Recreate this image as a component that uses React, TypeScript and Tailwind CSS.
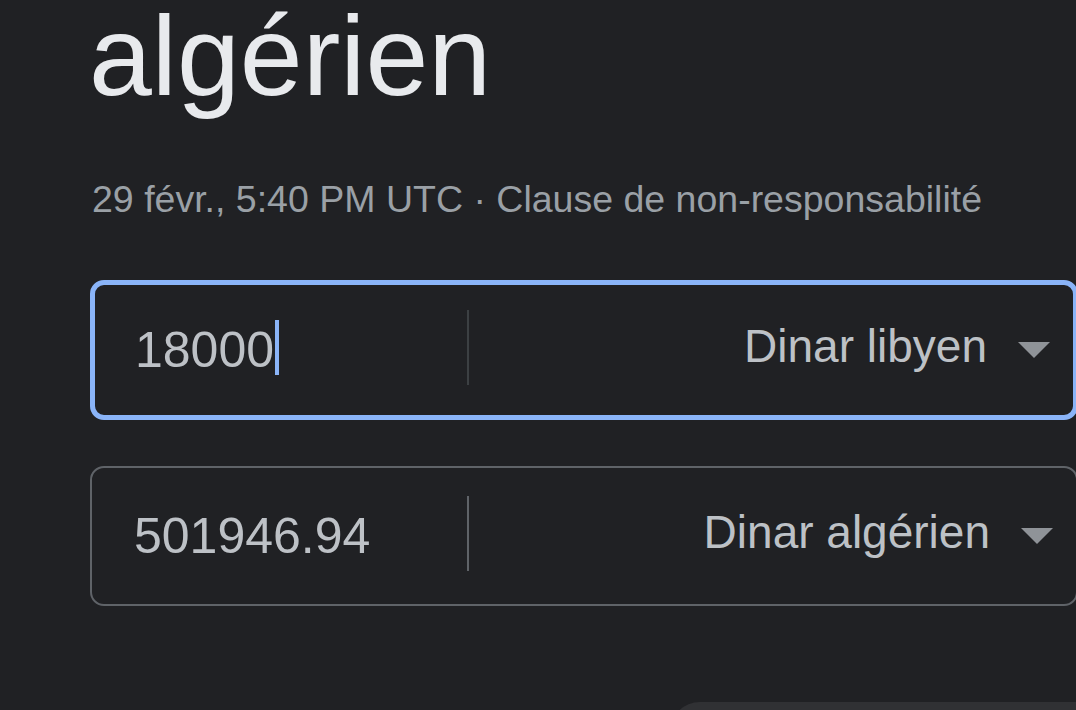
const font = { fontFamily: '"Liberation Sans", Arial, sans-serif' };

function Caret() {
  return <div className="ml-[1px] h-[55px] w-[4px] bg-[#8ab4f8] mb-[6px]" />;
}

function Triangle() {
  return (
    <svg className="ml-[31px] shrink-0" width="32" height="16" viewBox="0 0 32 16">
      <path d="M0 0h32L16 16z" fill="#8f9398" />
    </svg>
  );
}

type RowProps = {
  value: string;
  currency: string;
  focused?: boolean;
};

function ConverterRow({ value, currency, focused }: RowProps) {
  return (
    <div
      className={`flex h-[140px] w-[988px] shrink-0 items-center rounded-[14px] ${
        focused ? "border-[5px] border-[#8ab4f8]" : "border-2 border-[#5f6368]"
      }`}
    >
      <div
        className={`flex h-full items-center ${
          focused ? "w-[372px] pl-[40px]" : "w-[375px] pl-[42px]"
        }`}
      >
        <span className="text-[50px] text-[#bdc1c6]">{value}</span>
        {focused && <Caret />}
      </div>
      <div
        className={`mb-[6px] h-[75px] w-[2px] ${focused ? "bg-[#3c4043]" : "bg-[#5f6368]"}`}
      />
      <div className="flex flex-1 items-center justify-end pr-[23px]">
        <span className="mb-[7px] text-[46px] text-[#bdc1c6]">{currency}</span>
        <Triangle />
      </div>
    </div>
  );
}

export default function App() {
  return (
    <div
      className="h-[710px] w-[1076px] overflow-hidden bg-[#202124] pl-[90px]"
      style={font}
    >
      <h1 className="h-[112px] text-[113px] leading-[112px] text-[#e8eaed] -ml-[1px]">
        algérien
      </h1>
      <p className="mt-[63px] h-[48px] text-[37.5px] leading-[48px] text-[#9aa0a6] ml-[2px]">
        29 févr., 5:40 PM UTC · Clause de non-responsabilité
      </p>
      <div className="mt-[57px] flex flex-col gap-[46px]">
        <ConverterRow value="18000" currency="Dinar libyen" focused />
        <ConverterRow value="501946.94" currency="Dinar algérien" />
      </div>
      <div className="ml-[580px] mt-[96px] h-[60px] w-[520px] rounded-[40px] bg-[#303134]" />
    </div>
  );
}
